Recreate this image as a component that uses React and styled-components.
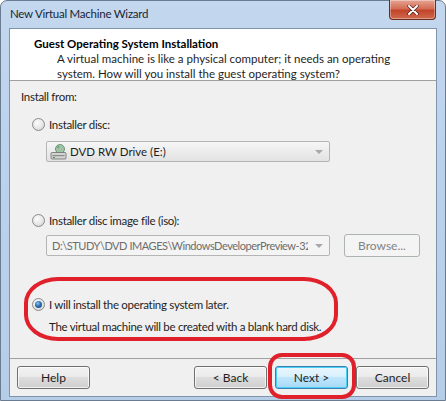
import React from "react";
import styled, { createGlobalStyle } from "styled-components";

const Global = createGlobalStyle`
  html, body {
    margin: 0;
    padding: 0;
    width: 446px;
    height: 401px;
    overflow: hidden;
    background: #ffffff;
  }
  body {
    font-family: "Lato", "Open Sans", sans-serif;
    font-size: 11.5px;
    color: #1e1e1e;
  }
`;

const Frame = styled.div`
  position: relative;
  width: 446px;
  height: 401px;
  box-sizing: border-box;
  border: 1px solid #6a7c92;
  border-radius: 7px 7px 0 0;
  background: linear-gradient(180deg, #c3d7ee 0%, #bcd2ec 40%, #b6cde8 100%);
  display: flex;
  flex-direction: column;
`;

const TitleBar = styled.div`
  height: 27px;
  display: flex;
  align-items: flex-start;
  padding-left: 9px;
  padding-right: 9px;
`;

const TitleText = styled.div`
  margin-top: 6px;
  font-size: 11.5px;
  letter-spacing: -0.25px;
  color: #1b2533;
`;

const CloseButton = styled.div`
  margin-left: auto;
  margin-top: -1px;
  width: 45px;
  height: 19px;
  border: 1px solid #6b2a22;
  border-top: none;
  border-radius: 0 0 4px 4px;
  background: linear-gradient(180deg, #e6a594 0%, #d46c55 45%, #c1442a 55%, #d06a4c 100%);
  display: flex;
  align-items: center;
  justify-content: center;
  box-shadow: inset 0 0 0 1px rgba(255, 255, 255, 0.35);
`;

const Client = styled.div`
  margin: 0 8px;
  height: 367px;
  border: 1px solid #7f93ab;
  display: flex;
  flex-direction: column;
  background: #f0f0f0;
`;

const Header = styled.div`
  height: 52px;
  background: #ffffff;
  border-bottom: 1px solid #a0a0a0;
  padding: 7px 0 0 24px;
  box-sizing: border-box;
`;

const HeaderTitle = styled.div`
  font-weight: 700;
  font-size: 11.5px;
  line-height: 15px;
  color: #000;
`;

const HeaderLine = styled.div`
  padding-left: 23px;
  line-height: 15px;
  white-space: nowrap;
  color: #1e1e1e;
`;

const Body = styled.div`
  flex: 1;
  position: relative;
  padding: 8px 0 0 11px;
  letter-spacing: -0.3px;
`;

const Label = styled.div`
  line-height: 15px;
`;

const Option = styled.label`
  display: flex;
  align-items: center;
  gap: 4px;
  margin-left: 11px;
  margin-top: ${(p) => p.$top}px;
  line-height: 15px;
`;

const Radio = styled.span`
  width: 11px;
  height: 11px;
  border-radius: 50%;
  border: 1px solid #8a8a8a;
  background: radial-gradient(circle at 40% 35%, #fdfdfd 0%, #e6e6e6 55%, #c9c9c9 100%);
  display: flex;
  align-items: center;
  justify-content: center;
  flex: none;
`;

const RadioDot = styled.span`
  width: 7px;
  height: 7px;
  border-radius: 50%;
  background: radial-gradient(circle at 40% 35%, #8ec5ee 0%, #2a6fb0 45%, #133f73 100%);
`;

const FieldRow = styled.div`
  display: flex;
  align-items: center;
  gap: 14px;
  margin-left: 25px;
  margin-top: ${(p) => p.$top}px;
`;

const Combo = styled.div`
  width: 284px;
  height: 21px;
  box-sizing: border-box;
  border: 1px solid #b5b5b5;
  border-radius: 2px;
  background: ${(p) => (p.$disabled ? "#f4f4f4" : "linear-gradient(180deg, #f6f6f6 0%, #ececec 50%, #e2e2e2 100%)")};
  display: flex;
  align-items: center;
  padding-left: 3px;
  gap: 3px;
  color: ${(p) => (p.$disabled ? "#6d6d6d" : "#1e1e1e")};
  overflow: hidden;
  white-space: nowrap;
  letter-spacing: 0;
`;

const ComboText = styled.span`
  flex: 1;
  min-width: 0;
  overflow: hidden;
  padding-left: ${(p) => p.$pad || 0}px;
  font-size: ${(p) => (p.$tight ? "11px" : "inherit")};
  letter-spacing: ${(p) => (p.$tight ? "-0.45px" : "0")};
`;

const Arrow = styled.span`
  flex: none;
  width: 0;
  height: 0;
  border-left: 4px solid transparent;
  border-right: 4px solid transparent;
  border-top: 4px solid #a8a8a8;
  margin: 0 6px 0 4px;
`;

const Button = styled.div`
  width: ${(p) => p.$w || 73}px;
  height: 23px;
  box-sizing: border-box;
  border: 1px solid ${(p) => (p.$default ? "#3c7fb1" : "#707070")};
  border-radius: 3px;
  background: ${(p) =>
    p.$default
      ? "linear-gradient(180deg, #eaf6fd 0%, #d9f0fc 45%, #bee6fd 50%, #a7d9f5 100%)"
      : "linear-gradient(180deg, #f2f2f2 0%, #ebebeb 45%, #dddddd 50%, #cfcfcf 100%)"};
  box-shadow: inset 0 0 0 1px ${(p) => (p.$default ? "#48d0f6" : "rgba(255,255,255,0.7)")};
  display: flex;
  align-items: center;
  justify-content: center;
  color: #1e1e1e;
  font-size: 12px;
  letter-spacing: 0;
  flex: none;
`;

const DisabledButton = styled(Button)`
  border-color: #adb2b5;
  background: #f4f4f4;
  box-shadow: none;
  color: #838383;
`;

const Footer = styled.div`
  height: 38px;
  border-top: 1px solid #a0a0a0;
  box-sizing: border-box;
  display: flex;
  align-items: center;
  padding: 0 7px 1px 7px;
`;

const Spacer = styled.div`
  flex: 1;
`;

const ButtonGroup = styled.div`
  display: flex;
  gap: 8px;
`;

const SubText = styled.div`
  margin-left: 28px;
  margin-top: 7px;
  line-height: 15px;
`;

const Ellipse = styled.div`
  position: absolute;
  left: 14px;
  top: 196px;
  width: 306px;
  height: 56px;
  border: 4px solid #e0202a;
  border-radius: 34px / 26px;
  pointer-events: none;
`;

const NextHighlight = styled.div`
  position: absolute;
  left: 267px;
  top: 352px;
  width: 80px;
  height: 38px;
  border: 4px solid #e0202a;
  border-radius: 14px;
  pointer-events: none;
`;

function DriveIcon() {
  return (
    <svg width="17" height="16" viewBox="0 0 17 16">
      <circle cx="10" cy="5" r="4.5" fill="#9fc9a6" stroke="#5d7d66" strokeWidth="0.8" />
      <circle cx="10" cy="5" r="1.2" fill="#f3f3f3" stroke="#6a6a6a" strokeWidth="0.5" />
      <path d="M7.5 3.5 L9 2.4" stroke="#2e7d3c" strokeWidth="1" />
      <rect x="1" y="8.5" width="15" height="6.5" rx="1" fill="#d3d3d3" stroke="#6d6d6d" strokeWidth="0.8" />
      <rect x="2.5" y="11" width="12" height="1.2" fill="#8a8a8a" />
      <rect x="3" y="13" width="2" height="1" fill="#3d9a3d" />
    </svg>
  );
}

function CloseGlyph() {
  return (
    <svg width="12" height="10" viewBox="0 0 12 10">
      <path d="M2 1 L10 9 M10 1 L2 9" stroke="#4b1a14" strokeWidth="3.2" strokeLinecap="round" />
      <path d="M2 1 L10 9 M10 1 L2 9" stroke="#ffffff" strokeWidth="2" strokeLinecap="round" />
    </svg>
  );
}

export default function App() {
  return (
    <>
      <Global />
      <Frame>
        <TitleBar>
          <TitleText>New Virtual Machine Wizard</TitleText>
          <CloseButton>
            <CloseGlyph />
          </CloseButton>
        </TitleBar>
        <Client>
          <Header>
            <HeaderTitle>Guest Operating System Installation</HeaderTitle>
            <HeaderLine>A virtual machine is like a physical computer; it needs an operating</HeaderLine>
            <HeaderLine>system. How will you install the guest operating system?</HeaderLine>
          </Header>
          <Body>
            <Label>Install from:</Label>
            <Option $top={13}>
              <Radio />
              Installer disc:
            </Option>
            <FieldRow $top={9}>
              <Combo>
                <DriveIcon />
                <ComboText>DVD RW Drive (E:)</ComboText>
                <Arrow />
              </Combo>
            </FieldRow>
            <Option $top={51}>
              <Radio />
              Installer disc image file (iso):
            </Option>
            <FieldRow $top={6}>
              <Combo $disabled>
                <ComboText $pad={2} $tight>D:\STUDY\DVD IMAGES\WindowsDeveloperPreview-32</ComboText>
                <Arrow />
              </Combo>
              <DisabledButton $w={76}>Browse...</DisabledButton>
            </FieldRow>
            <Option $top={40}>
              <Radio>
                <RadioDot />
              </Radio>
              I will install the operating system later.
            </Option>
            <SubText>The virtual machine will be created with a blank hard disk.</SubText>
            <Ellipse />
          </Body>
          <Footer>
            <Button>Help</Button>
            <Spacer />
            <ButtonGroup>
              <Button>&lt; Back</Button>
              <Button $default>Next &gt;</Button>
              <Button>Cancel</Button>
            </ButtonGroup>
          </Footer>
        </Client>
        <NextHighlight />
      </Frame>
    </>
  );
}
